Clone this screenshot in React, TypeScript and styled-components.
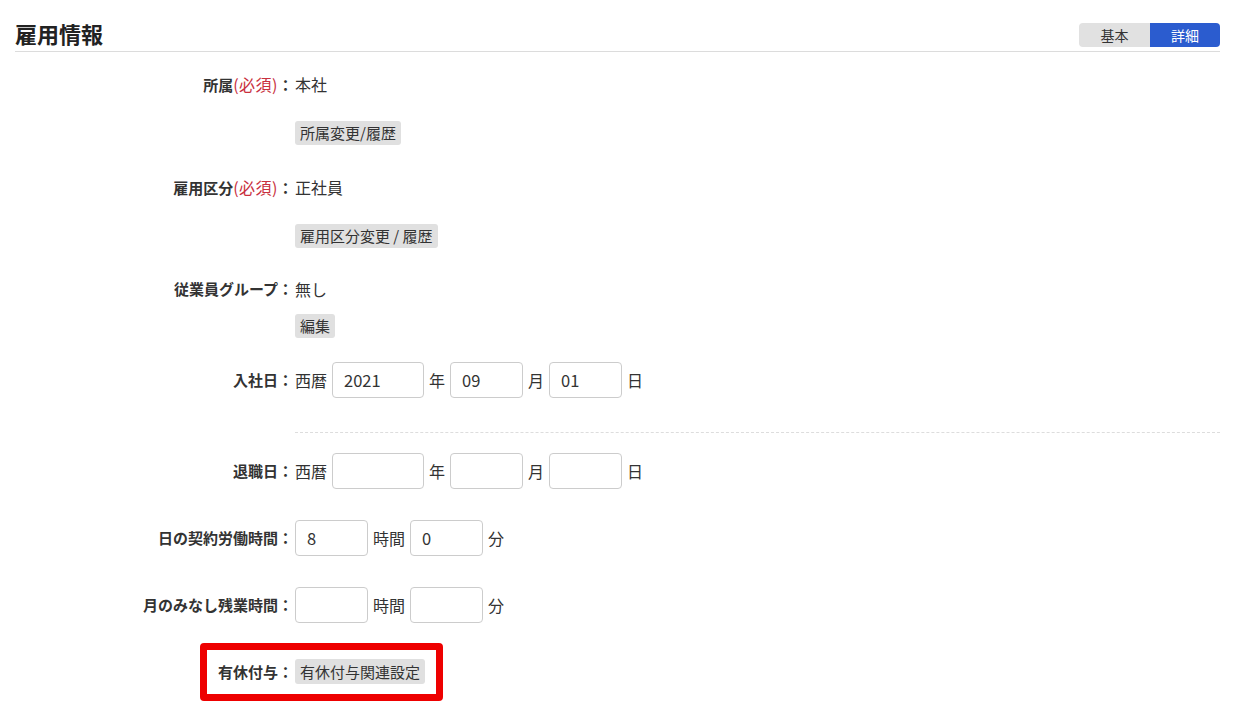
import React from "react";
import styled, { createGlobalStyle } from "styled-components";

const GlobalStyle = createGlobalStyle`
  html, body {
    margin: 0;
    padding: 0;
    background: #ffffff;
  }
  body {
    font-family: "Noto Sans CJK JP", "Noto Sans", "Liberation Sans", sans-serif;
    color: #333333;
  }
  * { box-sizing: border-box; }
`;

const Page = styled.div`
  min-height: 712px;
  padding: 19px 15px 30px 15px;
`;

const Header = styled.div`
  display: flex;
  justify-content: space-between;
  align-items: flex-start;
  padding-bottom: 4px;
  border-bottom: 1px solid #dcdcdc;
`;

const Title = styled.h2`
  margin: 0;
  font-size: 22px;
  line-height: 28px;
  font-weight: 700;
  color: #222222;
`;

const Toggle = styled.div`
  display: flex;
  margin-top: 4px;
  border-radius: 4px;
  overflow: hidden;
`;

const ToggleItem = styled.button<{ $active?: boolean }>`
  width: ${(p) => (p.$active ? 70 : 71)}px;
  height: 24px;
  border: none;
  padding: 0;
  font-family: inherit;
  font-size: 14px;
  line-height: 24px;
  background: ${(p) => (p.$active ? "#2b5ccf" : "#e1e1e1")};
  color: ${(p) => (p.$active ? "#ffffff" : "#333333")};
`;

const Row = styled.div<{ $mt: number; $center?: boolean }>`
  display: grid;
  grid-template-columns: 278px 1fr;
  column-gap: 2px;
  margin-top: ${(p) => p.$mt}px;
  align-items: ${(p) => (p.$center ? "center" : "start")};
  position: relative;
`;

const Label = styled.div`
  text-align: right;
  font-size: 15px;
  line-height: 24px;
  font-weight: 700;
  color: #333333;
  white-space: nowrap;
`;

const Required = styled.span`
  color: #c9303e;
  font-weight: 400;
  font-size: 16px;
  letter-spacing: 0.5px;
`;

const ValueCol = styled.div`
  display: flex;
  flex-direction: column;
  align-items: flex-start;
`;

const ValueText = styled.div`
  font-size: 16px;
  line-height: 24px;
  color: #333333;
`;

const GrayButton = styled.button<{ $mt?: number; $h?: number }>`
  margin-top: ${(p) => p.$mt ?? 0}px;
  height: ${(p) => p.$h ?? 24}px;
  line-height: ${(p) => p.$h ?? 24}px;
  padding: 0 5px;
  border: none;
  border-radius: 3px;
  background: #e0e0e0;
  color: #333333;
  font-family: inherit;
  font-size: 15px;
  white-space: nowrap;
`;

const InputLine = styled.div`
  display: flex;
  align-items: center;
  gap: 5px;
  font-size: 16px;
  line-height: 24px;
  color: #333333;
`;

const Unit = styled.span`
  white-space: nowrap;
`;

const TextInput = styled.input<{ $w: number }>`
  width: ${(p) => p.$w}px;
  height: 36px;
  border: 1px solid #cccccc;
  border-radius: 4px;
  padding: 0 11px;
  font-family: inherit;
  font-size: 16.5px;
  color: #333333;
  background: #ffffff;
  outline: none;
`;

const Divider = styled.div`
  grid-column: 2;
  border-top: 1px dashed #dddddd;
`;

const Highlight = styled.div`
  position: absolute;
  left: 185px;
  top: -16px;
  width: 243px;
  height: 58px;
  border: 7px solid #ee0000;
  border-radius: 4px;
  pointer-events: none;
`;

export default function App() {
  return (
    <>
      <GlobalStyle />
      <Page>
        <Header>
          <Title>雇用情報</Title>
          <Toggle>
            <ToggleItem>基本</ToggleItem>
            <ToggleItem $active>詳細</ToggleItem>
          </Toggle>
        </Header>

        <Row $mt={20}>
          <Label>
            所属<Required>(必須)</Required>：
          </Label>
          <ValueCol>
            <ValueText>本社</ValueText>
            <GrayButton $mt={25}>所属変更/履歴</GrayButton>
          </ValueCol>
        </Row>

        <Row $mt={30}>
          <Label>
            雇用区分<Required>(必須)</Required>：
          </Label>
          <ValueCol>
            <ValueText>正社員</ValueText>
            <GrayButton $mt={25}>雇用区分変更 / 履歴</GrayButton>
          </ValueCol>
        </Row>

        <Row $mt={29}>
          <Label>従業員グループ：</Label>
          <ValueCol>
            <ValueText>無し</ValueText>
            <GrayButton $mt={13}>編集</GrayButton>
          </ValueCol>
        </Row>

        <Row $mt={24} $center>
          <Label>入社日：</Label>
          <InputLine>
            <Unit>西暦</Unit>
            <TextInput $w={92} defaultValue="2021" />
            <Unit>年</Unit>
            <TextInput $w={73} defaultValue="09" />
            <Unit>月</Unit>
            <TextInput $w={73} defaultValue="01" />
            <Unit>日</Unit>
          </InputLine>
        </Row>

        <Row $mt={34}>
          <Divider />
        </Row>

        <Row $mt={20} $center>
          <Label>退職日：</Label>
          <InputLine>
            <Unit>西暦</Unit>
            <TextInput $w={92} />
            <Unit>年</Unit>
            <TextInput $w={73} />
            <Unit>月</Unit>
            <TextInput $w={73} />
            <Unit>日</Unit>
          </InputLine>
        </Row>

        <Row $mt={31} $center>
          <Label>日の契約労働時間：</Label>
          <InputLine>
            <TextInput $w={73} defaultValue="8" />
            <Unit>時間</Unit>
            <TextInput $w={73} defaultValue="0" />
            <Unit>分</Unit>
          </InputLine>
        </Row>

        <Row $mt={31} $center>
          <Label>月のみなし残業時間：</Label>
          <InputLine>
            <TextInput $w={73} />
            <Unit>時間</Unit>
            <TextInput $w={73} />
            <Unit>分</Unit>
          </InputLine>
        </Row>

        <Row $mt={36} $center>
          <Label>有休付与：</Label>
          <ValueCol>
            <GrayButton $h={25}>有休付与関連設定</GrayButton>
          </ValueCol>
          <Highlight />
        </Row>
      </Page>
    </>
  );
}
